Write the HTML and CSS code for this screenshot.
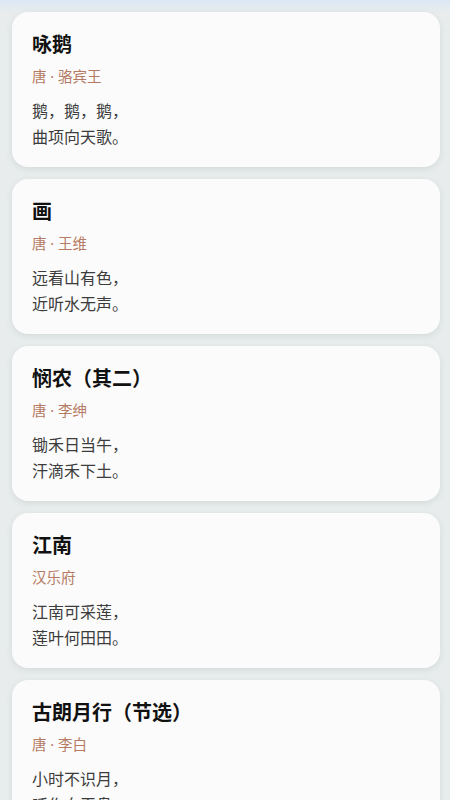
FILE: index.html
```html
<!DOCTYPE html>
<html lang="zh-CN">
<head>
    <meta charset="UTF-8">
    <meta name="viewport" content="width=device-width, initial-scale=1.0">
    <title>古诗</title>
    <link rel="stylesheet" href="styles.css">
</head>
<body>
    <div class="poem-list">
        <div class="poem-card">
            <h2 class="poem-title">咏鹅</h2>
            <div class="poem-meta">唐 · 骆宾王</div>
            <div class="poem-body">
                <p>鹅，鹅，鹅，</p>
                <p>曲项向天歌。</p>
            </div>
        </div>
        <div class="poem-card">
            <h2 class="poem-title">画</h2>
            <div class="poem-meta">唐 · 王维</div>
            <div class="poem-body">
                <p>远看山有色，</p>
                <p>近听水无声。</p>
            </div>
        </div>
        <div class="poem-card">
            <h2 class="poem-title">悯农（其二）</h2>
            <div class="poem-meta">唐 · 李绅</div>
            <div class="poem-body">
                <p>锄禾日当午，</p>
                <p>汗滴禾下土。</p>
            </div>
        </div>
        <div class="poem-card">
            <h2 class="poem-title">江南</h2>
            <div class="poem-meta">汉乐府</div>
            <div class="poem-body">
                <p>江南可采莲，</p>
                <p>莲叶何田田。</p>
            </div>
        </div>
        <div class="poem-card">
            <h2 class="poem-title">古朗月行（节选）</h2>
            <div class="poem-meta">唐 · 李白</div>
            <div class="poem-body">
                <p>小时不识月，</p>
                <p>呼作白玉盘。</p>
            </div>
        </div>
    </div>
</body>
</html>
```

FILE: styles.css
```css
body {
    margin: 0;
    padding: 0;
    font-family: "Noto Sans CJK SC", "Noto Sans", sans-serif;
    background: linear-gradient(to bottom, #dbe7f6 0, #e3ebf1 6px, #e8ecec 14px);
    background-color: #e8ecec;
    min-height: 100vh;
}
.poem-list {
    display: flex;
    flex-direction: column;
    gap: 12px;
    padding: 12px 10px 12px 12px;
}
.poem-card {
    background-color: #fbfbfb;
    border-radius: 16px;
    padding: 18px 20px;
    box-shadow: 0 2px 6px rgba(120, 140, 140, 0.18);
}
.poem-title {
    margin: 0;
    font-size: 20px;
    line-height: 28px;
    font-weight: 700;
    color: #111;
}
.poem-meta {
    margin-top: 8px;
    font-family: "Noto Sans", "Noto Sans CJK SC", sans-serif;
    font-size: 14.5px;
    line-height: 20px;
    color: #b57a63;
}
.poem-body {
    margin-top: 11px;
    font-size: 16px;
    line-height: 26px;
    color: #3c3c3c;
}
.poem-body p {
    margin: 0;
}
```
